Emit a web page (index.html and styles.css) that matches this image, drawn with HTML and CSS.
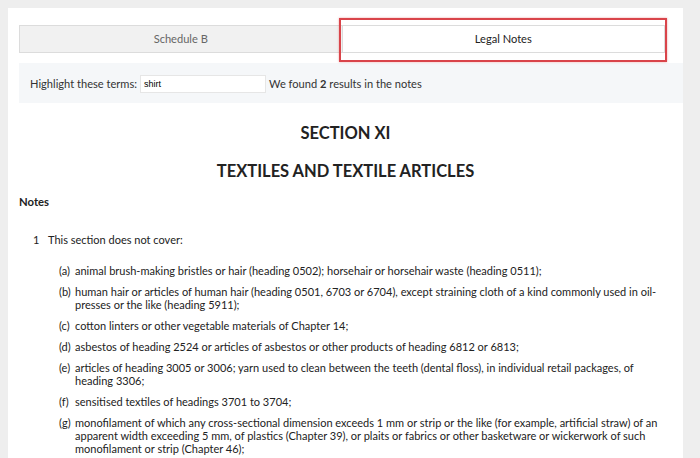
FILE: index.html
```html
<!DOCTYPE html>
<html lang="en">
<head>
    <meta charset="UTF-8">
    <title>Legal Notes</title>
    <link rel="stylesheet" href="styles.css">
</head>
<body>
    <div class="panel">
        <div class="tabs">
            <div class="tab">Schedule B</div>
            <div class="tab active">Legal Notes<span class="mark"></span></div>
        </div>
        <div class="highlight">
            <label>Highlight these terms:</label>
            <input class="terms" type="text" value="shirt">
            <span>We found <b>2</b> results in the notes</span>
        </div>

        <h2 class="section">SECTION XI</h2>
        <h2 class="title">TEXTILES AND TEXTILE ARTICLES</h2>
        <div class="notes">Notes</div>

        <div class="note">
            <span class="num">1</span>
            <span>This section does not cover:</span>
        </div>
        <ul class="items">
            <li><span class="lbl">(a)</span><span>animal brush-making bristles or hair (heading 0502); horsehair or horsehair waste (heading 0511);</span></li>
            <li><span class="lbl">(b)</span><span>human hair or articles of human hair (heading 0501, 6703 or 6704), except straining cloth of a kind commonly used in oil-presses or the like (heading 5911);</span></li>
            <li><span class="lbl">(c)</span><span>cotton linters or other vegetable materials of Chapter 14;</span></li>
            <li><span class="lbl">(d)</span><span>asbestos of heading 2524 or articles of asbestos or other products of heading 6812 or 6813;</span></li>
            <li><span class="lbl">(e)</span><span>articles of heading 3005 or 3006; yarn used to clean between the teeth (dental floss), in individual retail packages, of heading 3306;</span></li>
            <li><span class="lbl">(f)</span><span>sensitised textiles of headings 3701 to 3704;</span></li>
            <li><span class="lbl">(g)</span><span>monofilament of which any cross-sectional dimension exceeds 1 mm or strip or the like (for example, artificial straw) of an apparent width exceeding 5 mm, of plastics (Chapter 39), or plaits or fabrics or other basketware or wickerwork of such monofilament or strip (Chapter 46);</span></li>
        </ul>
    </div>
</body>
</html>
```
FILE: styles.css
```css
body {
    margin: 0;
    background-color: #eeeeee;
    font-family: Lato, "Open Sans", sans-serif;
    font-size: 11px;
    color: #222;
}
.panel {
    margin: 8px 0 0 8px;
    width: 653px;
    height: 433px;
    padding: 17px 11px 0 11px;
    background-color: white;
    overflow: hidden;
}
.tabs {
    display: flex;
    width: 646px;
}
.tab {
    flex: 1;
    height: 26px;
    line-height: 26px;
    text-align: center;
    background-color: #f1f1f1;
    border: 1px solid #dcdcdc;
    color: #666;
    position: relative;
    font-size: 11.1px;
}
.tab.active {
    background-color: white;
    color: #222;
    border-left: none;
}
.mark {
    position: absolute;
    left: -4px;
    right: -3px;
    top: -8px;
    bottom: -10px;
    border: 2px solid #d9444a;
    box-shadow: 0 0 2px rgba(217, 68, 74, 0.5);
}
.highlight {
    margin-top: 10px;
    width: 645px;
    height: 19px;
    padding: 11px 11px 10px 11px;
    background-color: #f5f7f9;
    display: flex;
    align-items: center;
    color: #333;
    font-size: 11.1px;
}
.highlight label {
    margin-right: 3px;
}
.terms {
    width: 118px;
    height: 16px;
    padding: 0 3px;
    border: 1px solid #e6e6e6;
    font-family: Arial, "Liberation Sans", sans-serif;
    font-size: 9px;
    margin: 0 3px 0 0;
}
.section {
    margin: 20px 0 0 0;
    font-size: 16.5px;
    text-align: center;
    font-weight: bold;
}
.title {
    margin: 18px 0 0 0;
    font-size: 16.5px;
    text-align: center;
    font-weight: bold;
}
.notes {
    margin-top: 14px;
    font-weight: bold;
    font-size: 11.3px;
}
.note {
    margin-top: 25px;
    display: flex;
    padding-left: 14px;
}
.note .num {
    width: 15px;
}
.items {
    list-style: none;
    margin: 18px 0 0 0;
    padding: 0 4px 0 40px;
}
.items li {
    display: flex;
    line-height: 13px;
    margin-bottom: 8px;
}
.lbl {
    flex: none;
    width: 16px;
}
```
